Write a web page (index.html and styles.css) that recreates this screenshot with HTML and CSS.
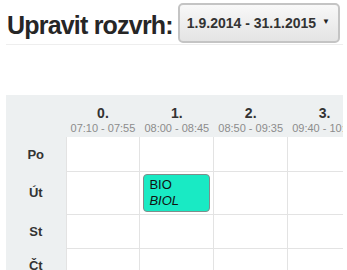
FILE: index.html
```html
<!DOCTYPE html>
<html lang="cs">
<head>
    <meta charset="UTF-8">
    <meta name="viewport" content="width=device-width, initial-scale=1.0">
    <title>Upravit rozvrh</title>
    <link rel="stylesheet" href="styles.css">
</head>
<body>
    <!-- Header with term picker -->
    <div class="page-header">
        <h1>Upravit rozvrh:</h1>
        <span class="select-wrap">
            <select class="term-select">
                <option>1.9.2014 - 31.1.2015</option>
                <option>1.2.2015 - 30.6.2015</option>
            </select>
        </span>
    </div>

    <!-- Timetable -->
    <div class="schedule">
        <table class="timetable">
            <colgroup>
                <col class="day-col">
                <col><col><col><col>
            </colgroup>
            <thead>
                <tr>
                    <th></th>
                    <th><b>0.</b><span class="time">07:10 - 07:55</span></th>
                    <th><b>1.</b><span class="time">08:00 - 08:45</span></th>
                    <th><b>2.</b><span class="time">08:50 - 09:35</span></th>
                    <th><b>3.</b><span class="time">09:40 - 10:25</span></th>
                </tr>
            </thead>
            <tbody>
                <tr>
                    <th class="day">Po</th>
                    <td></td><td></td><td></td><td></td>
                </tr>
                <tr>
                    <th class="day">Út</th>
                    <td></td>
                    <td><div class="lesson">BIO<br><i>BIOL</i></div></td>
                    <td></td><td></td>
                </tr>
                <tr>
                    <th class="day">St</th>
                    <td></td><td></td><td></td><td></td>
                </tr>
                <tr>
                    <th class="day">Čt</th>
                    <td></td><td></td><td></td><td></td>
                </tr>
            </tbody>
        </table>
    </div>
</body>
</html>
```

FILE: styles.css
```css
body {
    margin: 0 4px 0 6px;
    font-family: 'Liberation Sans', Arial, sans-serif;
    color: #333;
    overflow: hidden;
}

/* Header */
.page-header {
    display: flex;
    align-items: center;
    gap: 5px;
    padding: 3px 0 1px;
    border-bottom: 1px solid #eee;
}

h1 {
    flex-shrink: 0;
    margin: 0 0 0 1px;
    font-size: 25px;
    font-weight: bold;
    letter-spacing: -0.8px;
    line-height: 26px;
    padding-top: 4px;
    white-space: nowrap;
    color: #262626;
}

.select-wrap {
    flex-shrink: 0;
    position: relative;
    display: inline-block;
}

.select-wrap::after {
    content: "\25BC";
    position: absolute;
    right: 10px;
    top: 14px;
    font-size: 8px;
    color: #222;
    pointer-events: none;
}

.term-select {
    appearance: none;
    -webkit-appearance: none;
    width: 162px;
    height: 40px;
    padding: 0 0 0 7px;
    font-family: 'Liberation Sans', Arial, sans-serif;
    font-size: 14px;
    font-weight: bold;
    color: #333;
    background: linear-gradient(#f8f8f8, #e4e4e4);
    border: 2px solid #c4c4c4;
    border-radius: 5px;
}

/* Timetable */
.schedule {
    margin-top: 50px;
}

.timetable {
    border-collapse: collapse;
    table-layout: fixed;
    width: 356px;
    background: #edf0f1;
}

.day-col {
    width: 60px;
}

.timetable thead th {
    height: 42px;
    padding: 0;
    vertical-align: bottom;
    text-align: center;
    font-weight: normal;
}

.timetable thead th b {
    display: block;
    font-size: 14px;
    line-height: 16px;
}

.timetable .time {
    display: block;
    font-size: 11px;
    color: #8c8c8c;
    line-height: 14px;
    padding-bottom: 2px;
    white-space: nowrap;
}

.timetable .day {
    font-size: 13px;
    font-weight: bold;
    text-align: center;
    height: 34px;
    padding: 0;
}

.timetable td {
    background: #fff;
    border: 1px solid #e3e3e3;
    padding: 2px 3px;
    vertical-align: top;
}

.timetable tr:first-child td {
    border-top: none;
}

.lesson {
    background: #19eac4;
    border: 1px solid #7f8d8b;
    border-radius: 4px;
    padding: 2px 5px;
    font-size: 13px;
    line-height: 16px;
    color: #111;
}
```
